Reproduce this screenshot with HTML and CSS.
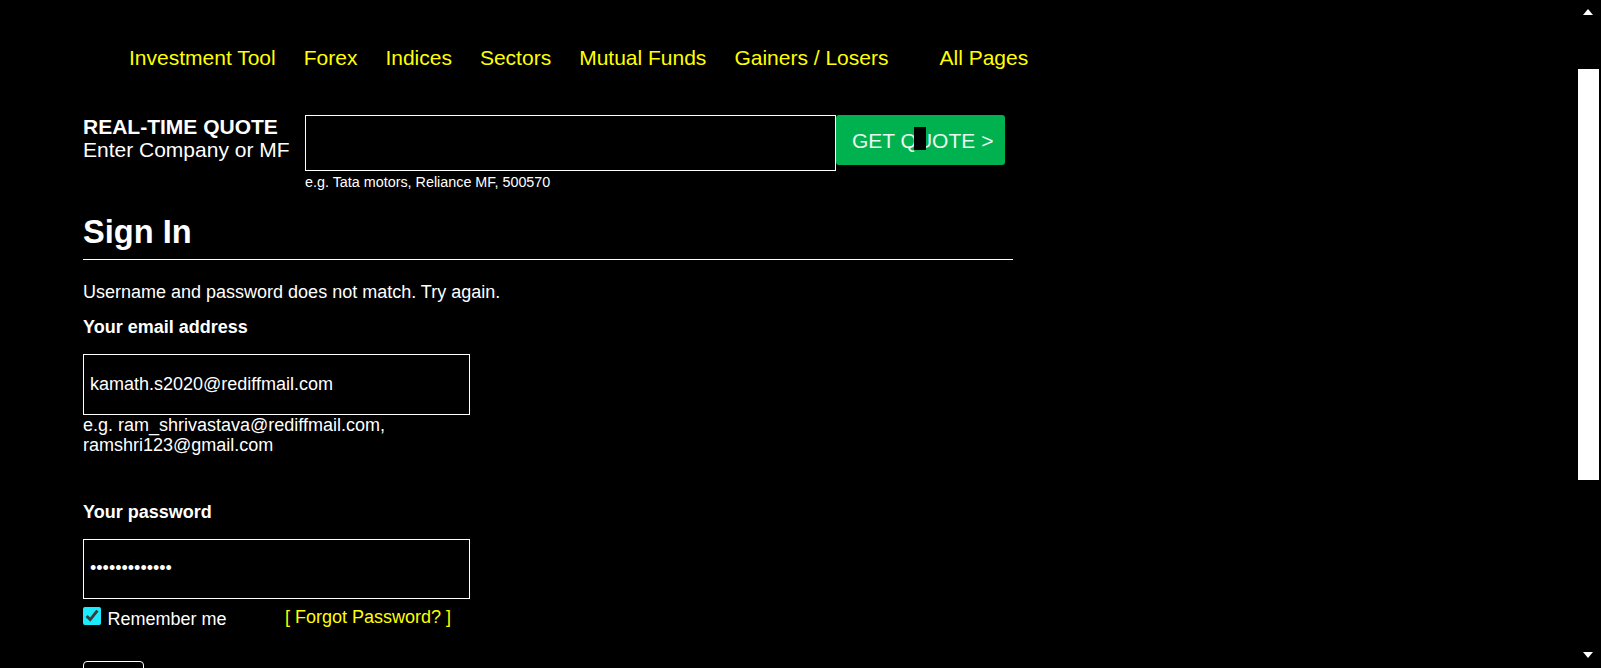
FILE: index.html
```html
<!DOCTYPE html>
<html lang="en">
<head>
<meta charset="utf-8">
<title>Sign In</title>
<link rel="stylesheet" href="styles.css">
</head>
<body>
<div class="page">
  <nav class="topnav">
    <a href="#">Investment Tool</a>
    <a href="#">Forex</a>
    <a href="#">Indices</a>
    <a href="#">Sectors</a>
    <a href="#">Mutual Funds</a>
    <a href="#">Gainers / Losers</a>
    <a href="#" class="all-pages">All Pages</a>
  </nav>

  <section class="quote">
    <div class="quote-label">
      <strong>REAL-TIME QUOTE</strong>
      <span>Enter Company or MF</span>
    </div>
    <div class="quote-field">
      <input class="quote-input" type="text" aria-label="Company or MF">
      <div class="quote-hint">e.g. Tata motors, Reliance MF, 500570</div>
    </div>
    <button class="quote-btn" type="button">GET QUOTE &gt;<span class="cursor-mark"></span></button>
  </section>

  <section class="signin">
    <h1 class="signin-title">Sign In</h1>
    <p class="signin-error">Username and password does not match. Try again.</p>
    <label class="field-label email-label" for="email">Your email address</label>
    <input class="field-input email-input" id="email" type="text" value="kamath.s2020@rediffmail.com">
    <div class="field-hint">e.g. ram_shrivastava@rediffmail.com, ramshri123@gmail.com</div>
    <label class="field-label pw-label" for="pw">Your password</label>
    <input class="field-input pw-input" id="pw" type="password" value="abcdefghijklm">
    <div class="options">
      <label class="remember"><input class="remember-box" type="checkbox" checked>Remember me</label>
      <a href="#" class="forgot">[ Forgot Password? ]</a>
    </div>
    <button class="submit" type="button"></button>
  </section>
</div>

<div class="scrollbar" aria-hidden="true">
  <span class="sb-up"></span>
  <span class="sb-thumb"></span>
  <span class="sb-down"></span>
</div>
</body>
</html>
```

FILE: styles.css
```css
html {
  overflow: hidden;
  background: #000;
}

body {
  margin: 0;
  background: #000;
  color: #fff;
  font-family: "Liberation Sans", Arial, sans-serif;
}

.page {
  padding-left: 83px;
}

/* top navigation */
.topnav {
  display: flex;
  gap: 28px;
  padding: 46px 0 0 46px;
  font-size: 21px;
  line-height: 24px;
}

.topnav a {
  color: #ffff00;
  text-decoration: none;
  white-space: nowrap;
}

.topnav .all-pages {
  margin-left: 23px;
}

/* real-time quote */
.quote {
  display: flex;
  align-items: flex-start;
  margin-top: 45px;
}

.quote-label {
  display: flex;
  flex-direction: column;
  width: 222px;
  flex: 0 0 222px;
  font-size: 21px;
  line-height: 23px;
}

.quote-label strong {
  font-weight: bold;
}

.quote-field {
  display: flex;
  flex-direction: column;
}

.quote-input {
  box-sizing: border-box;
  width: 531px;
  height: 56px;
  margin: 0;
  border: 1px solid #fff;
  background: #000;
  color: #fff;
  outline: none;
}

.quote-hint {
  margin-top: 3px;
  font-size: 14.35px;
  line-height: 16px;
}

.quote-btn {
  position: relative;
  box-sizing: border-box;
  width: 169px;
  height: 50px;
  margin: 0;
  padding: 2px 0 0 16px;
  border: none;
  border-radius: 3px;
  background: #00b14f;
  color: #e9f9ef;
  font-family: "Liberation Sans", Arial, sans-serif;
  font-size: 21px;
  line-height: 24px;
  text-align: left;
  white-space: nowrap;
}

.cursor-mark {
  position: absolute;
  left: 78px;
  top: 12px;
  width: 12px;
  height: 23px;
  background: #000;
}

/* sign in */
.signin {
  display: flex;
  flex-direction: column;
  align-items: flex-start;
  width: 930px;
}

.signin-title {
  align-self: stretch;
  margin: 23px 0 0;
  padding-bottom: 9px;
  border-bottom: 1px solid #fff;
  font-size: 32.6px;
  line-height: 37px;
  font-weight: bold;
}

.signin-error {
  margin: 22px 0 0;
  font-size: 18px;
  line-height: 21px;
}

.field-label {
  font-size: 18px;
  line-height: 21px;
  font-weight: bold;
}

.email-label {
  margin-top: 14px;
}

.pw-label {
  margin-top: 46px;
}

.field-input {
  box-sizing: border-box;
  width: 387px;
  margin: 0;
  padding: 0 6px;
  border: 1px solid #fff;
  background: #000;
  color: #fff;
  font-family: "Liberation Sans", Arial, sans-serif;
  font-size: 18px;
  outline: none;
}

.email-input {
  height: 61px;
  margin-top: 16px;
}

.pw-input {
  height: 60px;
  margin-top: 16px;
}

.field-hint {
  width: 387px;
  font-size: 18px;
  line-height: 20.4px;
}

.options {
  display: flex;
  align-items: flex-start;
  margin-top: 8px;
  font-size: 18px;
  line-height: 21px;
}

.remember {
  display: block;
  flex: 0 0 202px;
  white-space: nowrap;
}

.remember-box {
  width: 18px;
  height: 18px;
  margin: 0 6.5px 1px 0;
  vertical-align: baseline;
  accent-color: #1aebff;
}

.forgot {
  color: #ffff00;
  text-decoration: none;
  white-space: nowrap;
}

.submit {
  margin-top: 31px;
  width: 61px;
  height: 40px;
  padding: 0;
  border: 1px solid #fff;
  border-radius: 4px;
  background: #000;
}

/* high-contrast scrollbar (overlay at right edge) */
.scrollbar {
  position: fixed;
  top: 0;
  right: 0;
  width: 24px;
  height: 100%;
  background: #000;
}

.sb-thumb {
  position: absolute;
  left: 1px;
  top: 69px;
  width: 21px;
  height: 411px;
  background: #fff;
}

.sb-up,
.sb-down {
  position: absolute;
  left: 6px;
  width: 0;
  height: 0;
  border-left: 5.5px solid transparent;
  border-right: 5.5px solid transparent;
}

.sb-up {
  top: 9px;
  border-bottom: 6px solid #fff;
}

.sb-down {
  top: 652px;
  border-top: 6px solid #fff;
}
```
